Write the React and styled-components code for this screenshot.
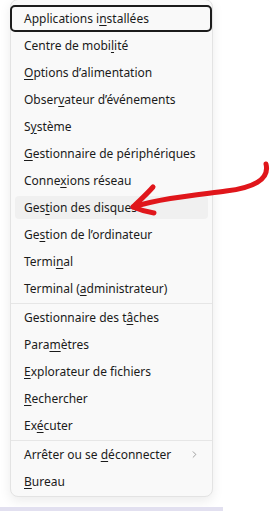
import React from "react";
import styled, { createGlobalStyle } from "styled-components";
import { ChevronRight } from "lucide-react";

const GlobalStyle = createGlobalStyle`
  html, body {
    margin: 0;
    padding: 0;
    background: #ffffff;
  }
  body {
    font-family: "Noto Sans", "Open Sans", sans-serif;
    overflow: hidden;
  }
`;

const Page = styled.div`
  position: relative;
  width: 271px;
  height: 511px;
  overflow: hidden;
`;

const Panel = styled.div`
  margin: -1px 0 0 10px;
  width: 201px;
  padding: 5px 0 1px;
  background: #f9f9f9;
  border: 1px solid #e3e3e3;
  border-radius: 8px;
  box-shadow: 0 4px 12px rgba(0, 0, 0, 0.08);
`;

const Row = styled.div`
  position: relative;
  height: 27px;
  padding: 2px 4px;
  box-sizing: border-box;

  &::after {
    content: "";
    display: ${p => (p.$focused ? "block" : "none")};
    position: absolute;
    inset: 0 0 0 -1px;
    border: 2px solid #1c1c1c;
    border-radius: 5px;
  }
`;

const Inner = styled.div`
  height: 100%;
  display: flex;
  align-items: center;
  justify-content: space-between;
  padding: 0 8px 0 9px;
  border-radius: 4px;
  background: ${p => (p.$hover ? "#f0f0f0" : "transparent")};
  color: #1b1b1b;
  font-size: 12px;
  white-space: nowrap;

  u {
    text-decoration-thickness: 1px;
    text-underline-offset: 2px;
  }
`;

const Separator = styled.div`
  height: 1px;
  margin: 0.5px 0;
  background: #e6e6e6;
`;

const Taskbar = styled.div`
  margin-top: 10px;
  width: 223px;
  height: 8px;
  background: #e2e0f0;
`;

const Overlay = styled.svg`
  position: absolute;
  left: 0;
  top: 0;
  pointer-events: none;
`;

const groups = [
  [
    { pre: "Applications i", key: "n", post: "stallées", focused: true },
    { pre: "Centre de mobi", key: "l", post: "ité" },
    { pre: "", key: "O", post: "ptions d’alimentation" },
    { pre: "Obser", key: "v", post: "ateur d’événements" },
    { pre: "S", key: "y", post: "stème" },
    { pre: "", key: "G", post: "estionnaire de périphériques" },
    { pre: "Conne", key: "x", post: "ions réseau" },
    { pre: "Ges", key: "t", post: "ion des disques", hover: true },
    { pre: "Ge", key: "s", post: "tion de l’ordinateur" },
    { pre: "Termi", key: "n", post: "al" },
    { pre: "Terminal (", key: "a", post: "dministrateur)" },
  ],
  [
    { pre: "Gestionnaire des t", key: "â", post: "ches" },
    { pre: "Para", key: "m", post: "ètres" },
    { pre: "", key: "E", post: "xplorateur de fichiers" },
    { pre: "", key: "R", post: "echercher" },
    { pre: "Ex", key: "é", post: "cuter" },
  ],
  [
    { pre: "Arrêter ou se ", key: "d", post: "éconnecter", sub: true },
    { pre: "", key: "B", post: "ureau" },
  ],
];

function MenuItem({ item }) {
  return (
    <Row $focused={item.focused}>
      <Inner $hover={item.hover}>
        <span>
          {item.pre}
          <u>{item.key}</u>
          {item.post}
        </span>
        {item.sub && <ChevronRight size={11} color="#777" strokeWidth={1.5} />}
      </Inner>
    </Row>
  );
}

function RedArrow() {
  return (
    <Overlay width="271" height="511" viewBox="0 0 271 511">
      <g
        fill="none"
        stroke="#e0161b"
        strokeWidth="5"
        strokeLinecap="round"
        strokeLinejoin="round"
      >
        <path d="M266 164 C270 180 252 188 226 191 C196 195 162 198 133 207" />
        <path d="M153 187 C146 195 139 201 133 207 C140 210 147 212 154 213" />
      </g>
    </Overlay>
  );
}

export default function App() {
  return (
    <Page>
      <GlobalStyle />
      <Panel>
        {groups.map((group, i) => (
          <React.Fragment key={i}>
            {i > 0 && <Separator />}
            {group.map((item, j) => (
              <MenuItem key={j} item={item} />
            ))}
          </React.Fragment>
        ))}
      </Panel>
      <Taskbar />
      <RedArrow />
    </Page>
  );
}
